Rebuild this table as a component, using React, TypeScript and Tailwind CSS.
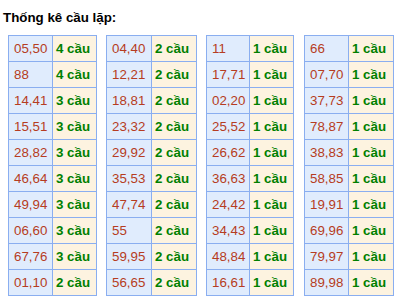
import React from "react";

const tables: { w1: string; w2: string; rows: [string, string][] }[] = [
  {
    w1: "w-[44px]",
    w2: "w-[44px]",
    rows: [
      ["05,50", "4 cầu"],
      ["88", "4 cầu"],
      ["14,41", "3 cầu"],
      ["15,51", "3 cầu"],
      ["28,82", "3 cầu"],
      ["46,64", "3 cầu"],
      ["49,94", "3 cầu"],
      ["06,60", "3 cầu"],
      ["67,76", "3 cầu"],
      ["01,10", "2 cầu"],
    ],
  },
  {
    w1: "w-[45px]",
    w2: "w-[45px]",
    rows: [
      ["04,40", "2 cầu"],
      ["12,21", "2 cầu"],
      ["18,81", "2 cầu"],
      ["23,32", "2 cầu"],
      ["29,92", "2 cầu"],
      ["35,53", "2 cầu"],
      ["47,74", "2 cầu"],
      ["55", "2 cầu"],
      ["59,95", "2 cầu"],
      ["56,65", "2 cầu"],
    ],
  },
  {
    w1: "w-[43px]",
    w2: "w-[44px]",
    rows: [
      ["11", "1 cầu"],
      ["17,71", "1 cầu"],
      ["02,20", "1 cầu"],
      ["25,52", "1 cầu"],
      ["26,62", "1 cầu"],
      ["36,63", "1 cầu"],
      ["24,42", "1 cầu"],
      ["34,43", "1 cầu"],
      ["48,84", "1 cầu"],
      ["16,61", "1 cầu"],
    ],
  },
  {
    w1: "w-[44px]",
    w2: "w-[45px]",
    rows: [
      ["66", "1 cầu"],
      ["07,70", "1 cầu"],
      ["37,73", "1 cầu"],
      ["78,87", "1 cầu"],
      ["38,83", "1 cầu"],
      ["58,85", "1 cầu"],
      ["19,91", "1 cầu"],
      ["69,96", "1 cầu"],
      ["79,97", "1 cầu"],
      ["89,98", "1 cầu"],
    ],
  },
];

const gaps = ["", "ml-[9px]", "ml-[9px]", "ml-[10px]"];

export default function App() {
  return (
    <div
      className="w-[399px] h-[300px] bg-white overflow-hidden"
      style={{ fontFamily: '"Liberation Sans", Arial, sans-serif' }}
    >
      <div className="pt-[10px] pl-[3px] text-[13.33px] leading-[15px] font-bold text-black">
        Thống kê cầu lặp:
      </div>
      <div className="flex items-start pl-[8px] mt-[10px]">
        {tables.map((t, i) => (
          <div
            key={i}
            className={`flex flex-col border-l border-t border-[#8aaef0] ${gaps[i]}`}
          >
            {t.rows.map(([a, b], j) => (
              <div key={j} className="flex h-[26px]">
                <div
                  className={`${t.w1} h-full flex items-center pl-[5px] bg-[#e0ecfd] border-r border-b border-[#8aaef0] text-[13.33px] text-[#b63c22]`}
                >
                  {a}
                </div>
                <div
                  className={`${t.w2} h-full flex items-center pl-[3px] bg-[#fdf3e0] border-r border-b border-[#8aaef0] text-[13.33px] font-bold text-[#008000]`}
                >
                  {b}
                </div>
              </div>
            ))}
          </div>
        ))}
      </div>
    </div>
  );
}
